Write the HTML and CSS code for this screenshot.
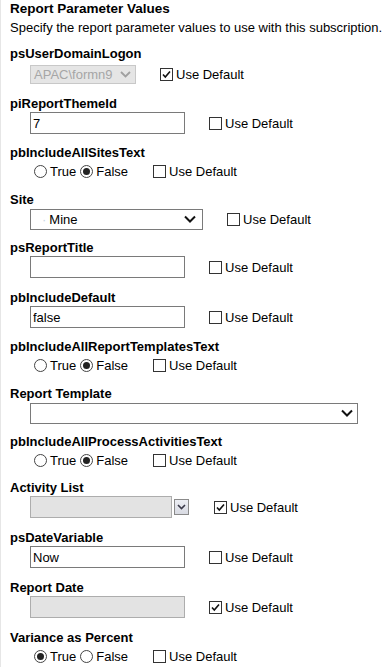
FILE: index.html
```html
<!DOCTYPE html>
<html>
<head>
<meta charset="utf-8">
<link rel="stylesheet" href="styles.css">
</head>
<body>
<div class="page">
  <h2 class="title">Report Parameter Values</h2>
  <p class="desc">Specify the report parameter values to use with this subscription.</p>

  <div class="param">
    <div class="pname">psUserDomainLogon</div>
    <div class="prow row-user">
      <span class="sel sel-dis w-user">APAC\formn9<svg class="chev" width="11" height="7" viewBox="0 0 11 7"><path d="M1 1 L5.5 5.5 L10 1" fill="none" stroke="#a0a0a0" stroke-width="1.8"/></svg></span>
      <label class="ud"><svg class="cb" width="13" height="13" viewBox="0 0 13 13"><rect x="0.5" y="0.5" width="12" height="12" fill="#fff" stroke="#333"/><path d="M3 6.5 L5.3 9 L10 3.5" fill="none" stroke="#111" stroke-width="1.6"/></svg>Use Default</label>
    </div>
  </div>

  <div class="param">
    <div class="pname">piReportThemeId</div>
    <div class="prow row-text">
      <input class="txt" type="text" value="7">
      <label class="ud"><svg class="cb" width="13" height="13" viewBox="0 0 13 13"><rect x="0.5" y="0.5" width="12" height="12" fill="#fff" stroke="#333"/></svg>Use Default</label>
    </div>
  </div>

  <div class="param param-radio">
    <div class="pname">pbIncludeAllSitesText</div>
    <div class="prow row-radio">
      <label class="rd"><svg width="13" height="13" viewBox="0 0 13 13"><circle cx="6.5" cy="6.5" r="6" fill="#fff" stroke="#444"/></svg>True</label>
      <label class="rd"><svg width="13" height="13" viewBox="0 0 13 13"><circle cx="6.5" cy="6.5" r="6" fill="#fff" stroke="#444"/><circle cx="6.5" cy="6.5" r="3.5" fill="#222"/></svg>False</label>
      <label class="ud"><svg class="cb" width="13" height="13" viewBox="0 0 13 13"><rect x="0.5" y="0.5" width="12" height="12" fill="#fff" stroke="#333"/></svg>Use Default</label>
    </div>
  </div>

  <div class="param">
    <div class="pname">Site</div>
    <div class="prow row-sel">
      <span class="sel w-site"><span class="dot">·</span>Mine<svg class="chev" width="12" height="8" viewBox="0 0 12 8"><path d="M1 1.5 L6 6.5 L11 1.5" fill="none" stroke="#111" stroke-width="2"/></svg></span>
      <label class="ud"><svg class="cb" width="13" height="13" viewBox="0 0 13 13"><rect x="0.5" y="0.5" width="12" height="12" fill="#fff" stroke="#333"/></svg>Use Default</label>
    </div>
  </div>

  <div class="param">
    <div class="pname">psReportTitle</div>
    <div class="prow row-text">
      <input class="txt" type="text" value="">
      <label class="ud"><svg class="cb" width="13" height="13" viewBox="0 0 13 13"><rect x="0.5" y="0.5" width="12" height="12" fill="#fff" stroke="#333"/></svg>Use Default</label>
    </div>
  </div>

  <div class="param">
    <div class="pname">pbIncludeDefault</div>
    <div class="prow row-text">
      <input class="txt" type="text" value="false">
      <label class="ud"><svg class="cb" width="13" height="13" viewBox="0 0 13 13"><rect x="0.5" y="0.5" width="12" height="12" fill="#fff" stroke="#333"/></svg>Use Default</label>
    </div>
  </div>

  <div class="param param-radio">
    <div class="pname">pbIncludeAllReportTemplatesText</div>
    <div class="prow row-radio">
      <label class="rd"><svg width="13" height="13" viewBox="0 0 13 13"><circle cx="6.5" cy="6.5" r="6" fill="#fff" stroke="#444"/></svg>True</label>
      <label class="rd"><svg width="13" height="13" viewBox="0 0 13 13"><circle cx="6.5" cy="6.5" r="6" fill="#fff" stroke="#444"/><circle cx="6.5" cy="6.5" r="3.5" fill="#222"/></svg>False</label>
      <label class="ud"><svg class="cb" width="13" height="13" viewBox="0 0 13 13"><rect x="0.5" y="0.5" width="12" height="12" fill="#fff" stroke="#333"/></svg>Use Default</label>
    </div>
  </div>

  <div class="param">
    <div class="pname">Report Template</div>
    <div class="prow row-sel">
      <span class="sel w-rt"><svg class="chev" width="12" height="8" viewBox="0 0 12 8"><path d="M1 1.5 L6 6.5 L11 1.5" fill="none" stroke="#111" stroke-width="2"/></svg></span>
    </div>
  </div>

  <div class="param param-radio">
    <div class="pname">pbIncludeAllProcessActivitiesText</div>
    <div class="prow row-radio">
      <label class="rd"><svg width="13" height="13" viewBox="0 0 13 13"><circle cx="6.5" cy="6.5" r="6" fill="#fff" stroke="#444"/></svg>True</label>
      <label class="rd"><svg width="13" height="13" viewBox="0 0 13 13"><circle cx="6.5" cy="6.5" r="6" fill="#fff" stroke="#444"/><circle cx="6.5" cy="6.5" r="3.5" fill="#222"/></svg>False</label>
      <label class="ud"><svg class="cb" width="13" height="13" viewBox="0 0 13 13"><rect x="0.5" y="0.5" width="12" height="12" fill="#fff" stroke="#333"/></svg>Use Default</label>
    </div>
  </div>

  <div class="param param-list">
    <div class="pname">Activity List</div>
    <div class="prow row-text">
      <span class="lbox"></span>
      <span class="lbtn"><svg width="9" height="6" viewBox="0 0 9 6"><path d="M1 1 L4.5 4.5 L8 1" fill="none" stroke="#3a3a4a" stroke-width="1.6"/></svg></span>
      <label class="ud"><svg class="cb" width="13" height="13" viewBox="0 0 13 13"><rect x="0.5" y="0.5" width="12" height="12" fill="#fff" stroke="#333"/><path d="M3 6.5 L5.3 9 L10 3.5" fill="none" stroke="#111" stroke-width="1.6"/></svg>Use Default</label>
    </div>
  </div>

  <div class="param">
    <div class="pname">psDateVariable</div>
    <div class="prow row-text">
      <input class="txt" type="text" value="Now">
      <label class="ud"><svg class="cb" width="13" height="13" viewBox="0 0 13 13"><rect x="0.5" y="0.5" width="12" height="12" fill="#fff" stroke="#333"/></svg>Use Default</label>
    </div>
  </div>

  <div class="param">
    <div class="pname">Report Date</div>
    <div class="prow row-text">
      <input class="txt txt-dis" type="text" value="" disabled>
      <label class="ud"><svg class="cb" width="13" height="13" viewBox="0 0 13 13"><rect x="0.5" y="0.5" width="12" height="12" fill="#fff" stroke="#333"/><path d="M3 6.5 L5.3 9 L10 3.5" fill="none" stroke="#111" stroke-width="1.6"/></svg>Use Default</label>
    </div>
  </div>

  <div class="param">
    <div class="pname">Variance as Percent</div>
    <div class="prow row-radio">
      <label class="rd"><svg width="13" height="13" viewBox="0 0 13 13"><circle cx="6.5" cy="6.5" r="6" fill="#fff" stroke="#444"/><circle cx="6.5" cy="6.5" r="3.5" fill="#222"/></svg>True</label>
      <label class="rd"><svg width="13" height="13" viewBox="0 0 13 13"><circle cx="6.5" cy="6.5" r="6" fill="#fff" stroke="#444"/></svg>False</label>
      <label class="ud"><svg class="cb" width="13" height="13" viewBox="0 0 13 13"><rect x="0.5" y="0.5" width="12" height="12" fill="#fff" stroke="#333"/></svg>Use Default</label>
    </div>
  </div>
</div>
</body>
</html>
```
FILE: styles.css
```css
html, body {
  margin: 0;
  padding: 0;
  background: #fff;
}
body {
  font-family: "Liberation Sans", Arial, sans-serif;
  font-size: 13px;
  color: #000;
  border-left: 1px solid #e6e6e6;
  min-height: 667px;
  box-sizing: border-box;
}
.page {
  padding: 1px 0 0 9px;
}
.title {
  margin: 0;
  font-size: 13.5px;
  font-weight: bold;
  line-height: 16px;
}
.desc {
  margin: 3px 0 10px;
  line-height: 16px;
}
.param {
  margin-bottom: 12px;
}
.param-radio {
  margin-top: -1px;
}
.param-list {
  margin-top: -2px;
}
.pname {
  font-weight: bold;
  line-height: 16px;
}
.prow {
  display: flex;
  align-items: center;
  padding-left: 20px;
}
.row-text { height: 22px; }
.row-user { height: 25px; margin-bottom: -3px; }
.row-sel { height: 22px; margin-bottom: -2px; }
.row-radio { height: 20px; margin-bottom: -1px; }

.txt {
  box-sizing: border-box;
  width: 155px;
  height: 22px;
  margin: 0;
  border: 1px solid #7a7a7a;
  padding: 0 2px;
  font-family: inherit;
  font-size: 13px;
  color: #000;
  background: #fff;
  outline: none;
}
.txt-dis {
  background: #e3e3e3;
  border-color: #adadad;
}
.sel {
  box-sizing: border-box;
  display: flex;
  align-items: center;
  justify-content: space-between;
  height: 21px;
  border: 1px solid #7a7a7a;
  padding: 0 6px 0 15px;
  background: #fff;
}
.sel .chev { margin-left: auto; }
.sel-dis {
  height: 19px;
  background: #e5e5e5;
  border-color: #c8c8c8;
  color: #a6a6a6;
  padding: 0 4px 0 3px;
}
.w-user { width: 106px; }
.w-site { width: 173px; padding-left: 11px; }
.w-rt { width: 328px; padding-right: 4px; }
.dot {
  color: #c9d6e3;
  margin-right: 3px;
}
.lbox {
  box-sizing: border-box;
  width: 142px;
  height: 22px;
  background: #e3e3e3;
  border: 1px solid #adadad;
}
.lbtn {
  box-sizing: border-box;
  width: 15px;
  height: 16px;
  margin-left: 2px;
  border: 1px solid #8a8a8a;
  background: linear-gradient(#eceef4, #d8dae2);
  display: flex;
  align-items: center;
  justify-content: center;
}
.ud {
  display: flex;
  align-items: center;
  margin-left: 24px;
}
.ud .cb { margin-right: 3px; }
.row-radio .ud { margin-left: 25px; }
.row-text .lbtn + .ud { margin-left: 25px; }
.rd {
  display: flex;
  align-items: center;
}
.rd svg { margin: 0 3px 0 4px; }
```
